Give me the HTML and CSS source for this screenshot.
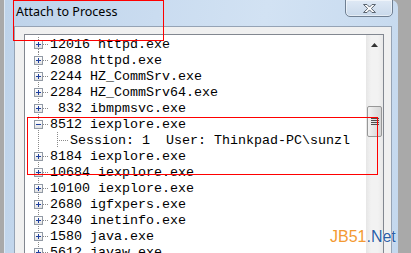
FILE: index.html
```html
<!DOCTYPE html>
<html lang="en">
<head>
  <meta charset="UTF-8">
  <meta name="viewport" content="width=device-width, initial-scale=1.0">
  <title>Attach to Process</title>
  <link rel="stylesheet" href="styles.css">
</head>
<body>

  <div class="window">
    <!-- Title bar -->
    <div class="titlebar">
      <span class="title">Attach to Process</span>
      <button class="close" title="Close">
        <svg width="15" height="11" viewBox="0 0 15 11">
          <path d="M1.5 1.5h3.5l2.5 2.6 2.5-2.6h3.5l-4.2 4 4.2 4h-3.5l-2.5-2.6-2.5 2.6h-3.5l4.2-4z" fill="#fff" stroke="#5a6470" stroke-width="1" stroke-linejoin="round"/>
        </svg>
      </button>
    </div>

    <!-- Client area -->
    <div class="client">
      <div class="listbox">
        <div class="tree">
          <div class="node"><span class="exp plus"></span><span class="dash"></span><span class="label">12016 httpd.exe</span></div>
          <div class="node"><span class="exp plus"></span><span class="dash"></span><span class="label">2088 httpd.exe</span></div>
          <div class="node"><span class="exp plus"></span><span class="dash"></span><span class="label">2244 HZ_CommSrv.exe</span></div>
          <div class="node"><span class="exp plus"></span><span class="dash"></span><span class="label">2284 HZ_CommSrv64.exe</span></div>
          <div class="node"><span class="exp plus"></span><span class="dash"></span><span class="label"> 832 ibmpmsvc.exe</span></div>
          <div class="node"><span class="exp minus"></span><span class="dash"></span><span class="label">8512 iexplore.exe</span></div>
          <div class="node child"><span class="elbow"></span><span class="label">Session: 1  User: Thinkpad-PC\sunzl</span></div>
          <div class="node"><span class="exp plus"></span><span class="dash"></span><span class="label">8184 iexplore.exe</span></div>
          <div class="node"><span class="exp plus"></span><span class="dash"></span><span class="label">10684 iexplore.exe</span></div>
          <div class="node"><span class="exp plus"></span><span class="dash"></span><span class="label">10100 iexplore.exe</span></div>
          <div class="node"><span class="exp plus"></span><span class="dash"></span><span class="label">2680 igfxpers.exe</span></div>
          <div class="node"><span class="exp plus"></span><span class="dash"></span><span class="label">2340 inetinfo.exe</span></div>
          <div class="node"><span class="exp plus"></span><span class="dash"></span><span class="label">1580 java.exe</span></div>
          <div class="node"><span class="exp plus"></span><span class="dash"></span><span class="label">5612 javaw.exe</span></div>
        </div>
        <div class="vscroll">
          <div class="sb-up">
            <svg width="7" height="4" viewBox="0 0 7 4"><path d="M3.5 0L7 4H0z" fill="#333"/></svg>
          </div>
          <div class="sb-gap"></div>
          <div class="thumb"><span class="grip"></span></div>
        </div>
      </div>
    </div>
  </div>

  <!-- annotation boxes and watermark lie over the screenshot -->
  <div class="mark mark-title"></div>
  <div class="mark mark-node"></div>
  <div class="watermark"><span class="wm-a">JB51</span><span class="wm-b">.Net</span></div>

</body>
</html>
```

FILE: styles.css
```css
body {
  margin: 0;
  height: 253px;
  overflow: hidden;
  background-color: #a9a9a9;
  display: flex;
  position: relative;
}
.window {
  margin-left: 4px;
  width: 394px;
  height: 260px;
  display: flex;
  flex-direction: column;
  border-top-right-radius: 7px;
  border-left: 1px solid #dce7f3;
  box-sizing: border-box;
  background: linear-gradient(100deg, #bed3ea 0%, #cadcf0 35%, #d2e2f3 60%, #c4d8ee 100%);
}
.titlebar {
  height: 27px;
  display: flex;
  justify-content: space-between;
  align-items: flex-start;
}
.title {
  font-family: "Noto Sans", sans-serif;
  font-size: 12.5px;
  color: #000;
  padding: 3px 0 0 11px;
}
.close {
  width: 48px;
  height: 18px;
  margin: -1px 5px 0 0;
  padding: 0;
  border: 1px solid #6f7f92;
  border-radius: 0 0 5px 5px;
  background: linear-gradient(#dfe9f5, #c9d9eb);
  box-shadow: inset 0 0 0 1px rgba(255, 255, 255, 0.5);
  display: flex;
  align-items: center;
  justify-content: center;
}
.client {
  flex: 1;
  margin: 0 6px 0 9px;
  padding: 7px 7px 0 9px;
  border: 1px solid #95a3b5;
  border-bottom: none;
  background-color: #f0f0f0;
  display: flex;
}
.listbox {
  flex: 1;
  display: flex;
  border: 1px solid #828790;
  border-bottom: none;
}
.tree {
  flex: 1;
  background-color: #fff;
  padding-top: 1px;
  font-family: "Liberation Mono", monospace;
  font-size: 13.33px;
  color: #000;
}
.node {
  height: 16px;
  display: flex;
  align-items: center;
  padding-left: 9px;
  white-space: pre;
  background-image: linear-gradient(to bottom, #8a8a8a 50%, transparent 50%);
  background-size: 1px 2px;
  background-position: 13px 0;
  background-repeat: repeat-y;
}
.node:first-child {
  background-position: 13px 1px;
}
.exp {
  width: 9px;
  height: 9px;
  box-sizing: border-box;
  border: 1px solid #929aa5;
  background: linear-gradient(#fff, #e2e2e2);
  position: relative;
}
.exp::before {
  content: "";
  position: absolute;
  left: 1px;
  top: 3px;
  width: 5px;
  height: 1px;
  background-color: #1e3f9e;
}
.plus::after {
  content: "";
  position: absolute;
  left: 3px;
  top: 1px;
  width: 1px;
  height: 5px;
  background-color: #1e3f9e;
}
.dash {
  width: 6px;
  height: 1px;
  background-image: linear-gradient(to right, #8a8a8a 50%, transparent 50%);
  background-size: 2px 1px;
  margin-right: 1px;
}
.child {
  padding-left: 32px;
}
.elbow {
  align-self: stretch;
  width: 12px;
  margin-right: 1px;
  background-image:
    linear-gradient(to bottom, #8a8a8a 50%, transparent 50%),
    linear-gradient(to right, #8a8a8a 50%, transparent 50%);
  background-size: 1px 2px, 2px 1px;
  background-position: 0 0, 0 8px;
  background-repeat: repeat-y, repeat-x;
}
.vscroll {
  width: 17px;
  display: flex;
  flex-direction: column;
  align-items: center;
  background: linear-gradient(to right, #e6e6e6, #f2f2f2 30%, #f2f2f2 70%, #e8e8e8);
}
.sb-up {
  height: 17px;
  width: 17px;
  display: flex;
  align-items: center;
  justify-content: center;
  padding-top: 2px;
  box-sizing: border-box;
}
.sb-gap {
  height: 54px;
}
.thumb {
  width: 15px;
  height: 31px;
  box-sizing: border-box;
  border: 1px solid #979797;
  border-radius: 2px;
  background: linear-gradient(to right, #f3f3f3, #e3e3e3 50%, #d6d6d6);
  display: flex;
  align-items: center;
  justify-content: center;
}
.grip {
  width: 8px;
  height: 7px;
  background-image: linear-gradient(to bottom, #4d4d4d 50%, transparent 50%);
  background-size: 8px 2px;
}
.mark {
  position: absolute;
  border: 1px solid #ff0000;
}
.mark-title {
  left: 13px;
  top: 0;
  width: 149px;
  height: 39px;
}
.mark-node {
  left: 27px;
  top: 117px;
  width: 349px;
  height: 56px;
}
.watermark {
  position: absolute;
  left: 330px;
  top: 228px;
  font-family: "Liberation Sans", sans-serif;
  font-size: 16px;
  text-shadow: 0 0 1px #fff, 0 0 1px #fff;
}
.wm-a {
  color: #f39a32;
}
.wm-b {
  color: #2b5ea5;
}
```
